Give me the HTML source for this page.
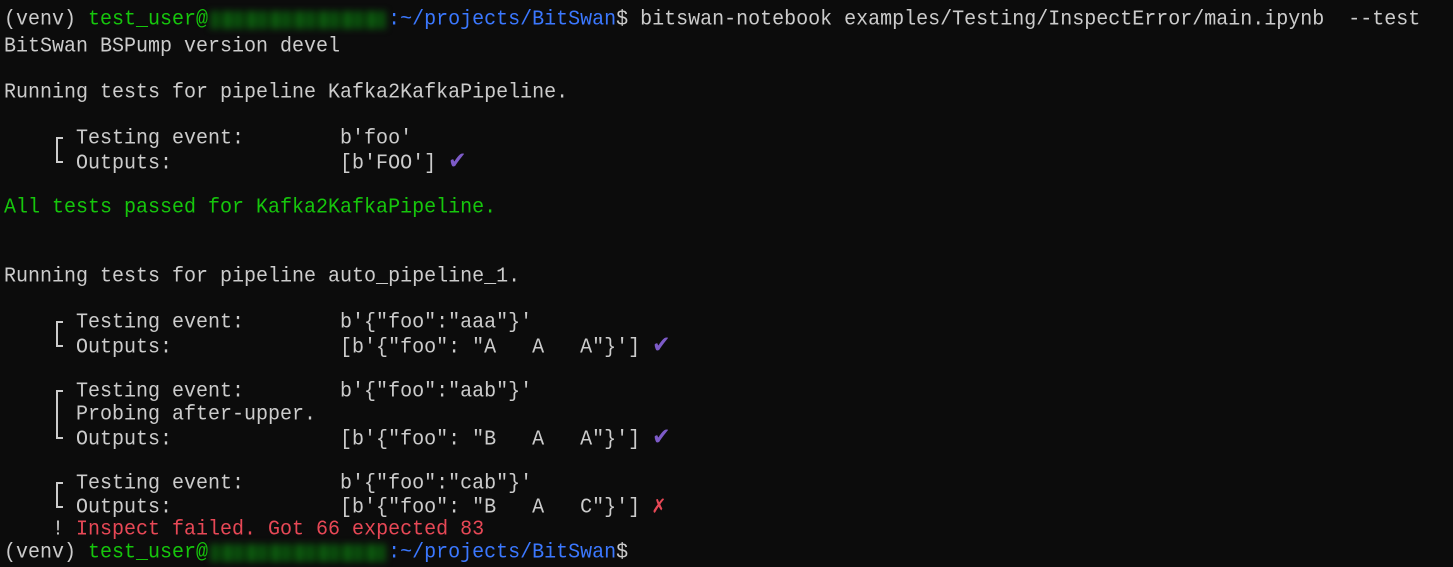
<!DOCTYPE html>
<html><head><meta charset="utf-8"><style>
html,body{margin:0;padding:0;background:#0c0c0c;width:1453px;height:567px;overflow:hidden}
.l{position:absolute;left:4px;height:23px;line-height:23px;white-space:pre;font-family:"Liberation Mono","DejaVu Sans Mono",monospace;font-size:20px;color:#cccccc;transform:scaleY(1.08);transform-origin:0 50%}
.g{color:#16c60c}.b{color:#3b78ff}.r{color:#e74856}.p{color:#7d5bc8;font-family:"DejaVu Sans",sans-serif;font-size:22px}
.br{position:absolute;left:56px;width:6px;border-left:2px solid #cccccc;box-sizing:border-box}
.br:before,.br:after{content:"";position:absolute;left:0;width:5px;height:2px;background:#cccccc}
.br:before{top:0}.br:after{bottom:0}
.blur{position:absolute;height:18px;width:176px;left:210px;background:repeating-linear-gradient(90deg,#0b4d0d 0 9px,#062c07 9px 14px,#0f6311 14px 20px,#083a0a 20px 24px);filter:blur(3.5px)}
</style></head><body>
<div class="l" style="top:8px">(venv) <span class="g">test_user@</span>               <span class="b">:~/projects/BitSwan</span>$ bitswan-notebook examples/Testing/InspectError/main.ipynb  --test</div>
<div class="blur" style="top:11px"></div>
<div class="l" style="top:35px">BitSwan BSPump version devel</div>
<div class="l" style="top:81px">Running tests for pipeline Kafka2KafkaPipeline.</div>
<div class="l" style="top:127px">      Testing event:        b'foo'</div>
<div class="l" style="top:150px">      Outputs:              [b'FOO'] <span class="p">✔</span></div>
<div class="br" style="top:137px;height:26px"></div>
<div class="l g" style="top:196px">All tests passed for Kafka2KafkaPipeline.</div>
<div class="l" style="top:265px">Running tests for pipeline auto_pipeline_1.</div>
<div class="l" style="top:311px">      Testing event:        b'{"foo":"aaa"}'</div>
<div class="l" style="top:334px">      Outputs:              [b'{"foo": "A   A   A"}'] <span class="p">✔</span></div>
<div class="br" style="top:321px;height:26px"></div>
<div class="l" style="top:380px">      Testing event:        b'{"foo":"aab"}'</div>
<div class="l" style="top:403px">      Probing after-upper.</div>
<div class="l" style="top:426px">      Outputs:              [b'{"foo": "B   A   A"}'] <span class="p">✔</span></div>
<div class="br" style="top:390px;height:49px"></div>
<div class="l" style="top:472px">      Testing event:        b'{"foo":"cab"}'</div>
<div class="l" style="top:495px">      Outputs:              [b'{"foo": "B   A   C"}'] <span class="r" style="font-size:22px">✗</span></div>
<div class="br" style="top:482px;height:26px"></div>
<div class="l" style="top:518px">    ! <span class="r">Inspect failed. Got 66 expected 83</span></div>
<div class="l" style="top:541px">(venv) <span class="g">test_user@</span>               <span class="b">:~/projects/BitSwan</span>$</div>
<div class="blur" style="top:544px"></div>
</body></html>
